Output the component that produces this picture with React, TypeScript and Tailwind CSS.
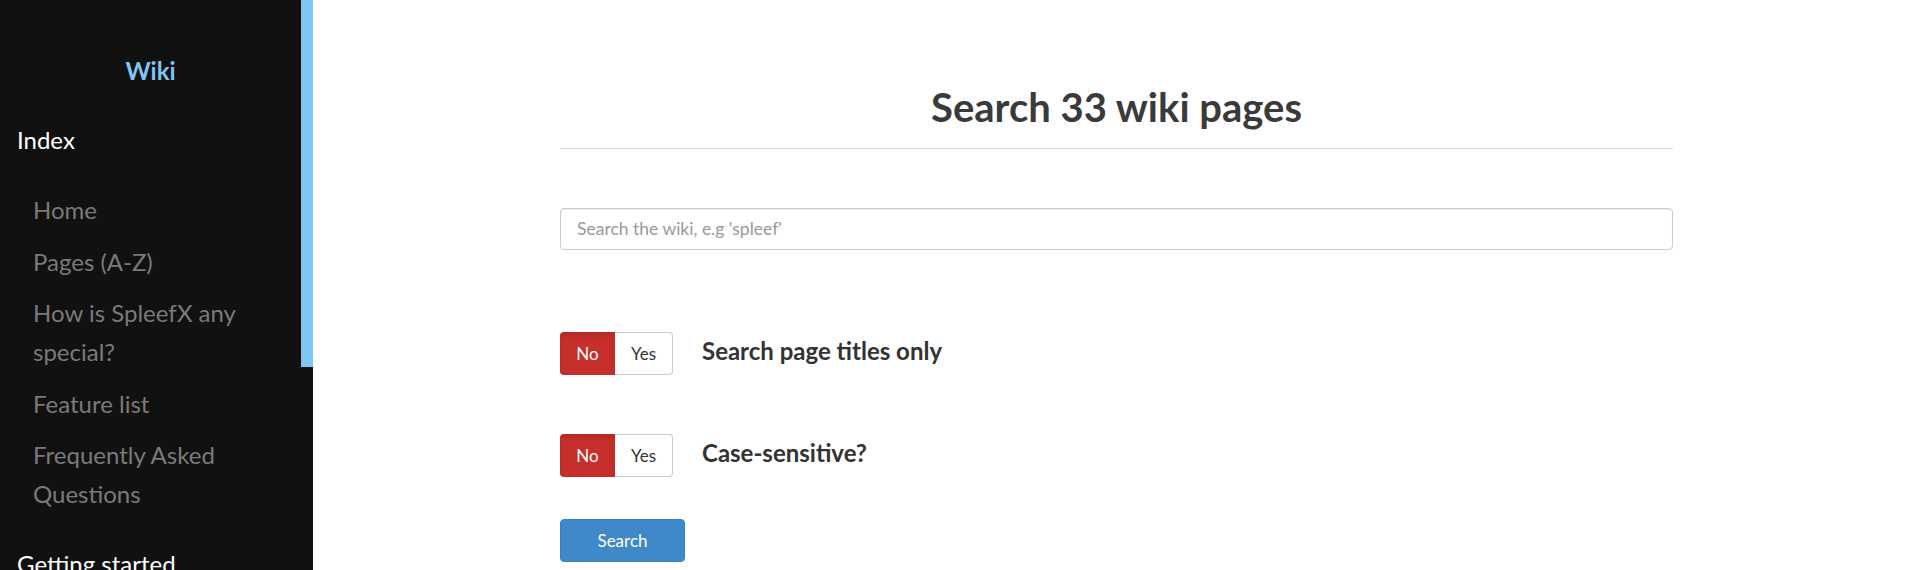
import React from "react";

const navItems = [
  "Home",
  "Pages (A-Z)",
  "How is SpleefX any special?",
  "Feature list",
  "Frequently Asked Questions",
];

function Toggle() {
  return (
    <div className="flex h-[43px] w-[113px] shrink-0 text-[17px]">
      <div className="flex w-[55px] items-center justify-center rounded-l-[4px] bg-[#c62f2b] text-white shadow-[inset_0_3px_5px_rgba(0,0,0,0.125)]">
        No
      </div>
      <div className="flex w-[58px] items-center justify-center rounded-r-[4px] border border-l-0 border-[#cccccc] bg-white text-[#333333]">
        Yes
      </div>
    </div>
  );
}

export default function App() {
  return (
    <div
      className="flex h-[570px] w-[1920px] overflow-hidden bg-white"
      style={{ fontFamily: "Lato, 'Open Sans', sans-serif" }}
    >
      <aside className="flex w-[313px] shrink-0 bg-[#111111]">
        <div className="w-[301px] text-[24px] leading-[39px]">
          <div className="mt-[51px] text-center font-bold text-[#7fc6f2]">Wiki</div>
          <div className="mt-[30px] pl-[17px] text-white">Index</div>
          <ul className="mt-[31px] flex flex-col gap-[12.5px] pl-[33px] pr-[20px] text-[#7a7a7a]">
            {navItems.map((n) => (
              <li key={n}>{n}</li>
            ))}
          </ul>
          <div className="mt-[31px] pl-[17px] text-white">Getting started</div>
        </div>
        <div className="w-[12px]">
          <div className="h-[367px] w-[12px] bg-[#7fc6f2]" />
        </div>
      </aside>
      <main className="flex flex-1 justify-center">
        <div className="w-[1113px]">
          <h1 className="mt-[83px] border-b border-[#dddddd] pb-[17px] text-center text-[40px] font-bold leading-[1.2] text-[#3a3a3a]">
            Search 33 wiki pages
          </h1>
          <div className="mt-[59px] flex h-[42px] items-center rounded-[4px] border border-[#cccccc] px-[16px] text-[17.5px] text-[#999999] shadow-[inset_0_1px_1px_rgba(0,0,0,0.075)]">
            Search the wiki, e.g 'spleef'
          </div>
          <div className="mt-[82px] flex items-center gap-[29px]">
            <Toggle />
            <div className="-mt-[5px] text-[24px] font-bold text-[#333333]">Search page titles only</div>
          </div>
          <div className="mt-[59px] flex items-center gap-[29px]">
            <Toggle />
            <div className="-mt-[5px] text-[24px] font-bold text-[#333333]">Case-sensitive?</div>
          </div>
          <div className="mt-[42px] flex h-[43px] w-[125px] items-center justify-center rounded-[4px] border border-[#3a80bd] bg-[#4089c9] text-[17px] text-white">
            Search
          </div>
        </div>
      </main>
    </div>
  );
}
